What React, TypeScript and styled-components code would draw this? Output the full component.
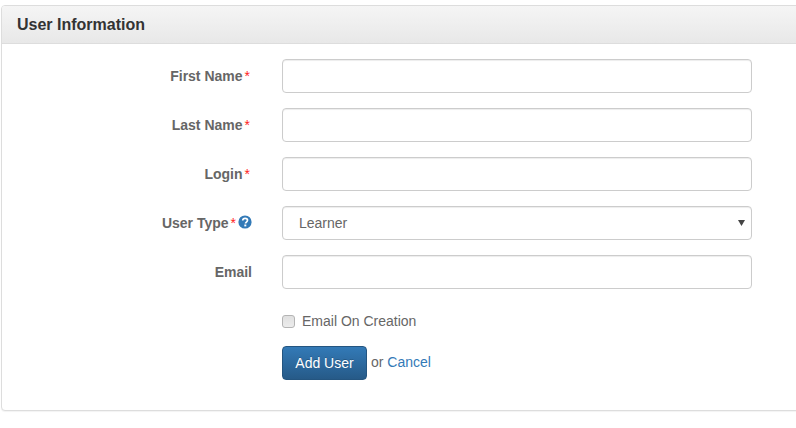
import React from "react";
import styled, { createGlobalStyle } from "styled-components";

const Global = createGlobalStyle`
  html, body { margin: 0; padding: 0; background: #fff; overflow: hidden; }
  body { font-family: "Liberation Sans", Arial, sans-serif; font-size: 14px; color: #555; }
`;
const Page = styled.div`
  width: 796px;
  height: 428px;
  overflow: hidden;
  padding: 5px 0 0 1px;
  box-sizing: border-box;
`;
const Panel = styled.section`
  width: 820px;
  height: 406px;
  box-sizing: border-box;
  border: 1px solid #ddd;
  border-radius: 4px;
  box-shadow: 0 1px 1px rgba(0, 0, 0, 0.05);
  background: #fff;
`;
const Header = styled.header`
  height: 37px;
  box-sizing: content-box;
  border-bottom: 1px solid #ddd;
  border-radius: 3px 3px 0 0;
  background: linear-gradient(to bottom, #f5f5f5, #e8e8e8);
  display: flex;
  align-items: center;
  padding-left: 15px;
`;
const Title = styled.h3`
  margin: 0;
  font-size: 16px;
  font-weight: 700;
  color: #333;
`;
const Form = styled.form`
  display: flex;
  flex-direction: column;
  gap: 15px;
  padding-top: 15px;
`;
const Row = styled.div`
  display: grid;
  grid-template-columns: 250px 470px;
  column-gap: 30px;
  align-items: center;
  height: 34px;
`;
const Label = styled.label<{ $inset?: boolean }>`
  display: flex;
  justify-content: flex-end;
  align-items: center;
  font-weight: 700;
  color: #666;
  white-space: nowrap;
  padding-right: ${(p) => (p.$inset ? "2px" : "0")};
`;
const Req = styled.span`
  color: #f22;
  font-weight: 400;
  margin-left: 2px;
`;
const Help = styled.svg`
  width: 14px;
  height: 14px;
  margin-left: 2px;
  margin-top: -2px;
`;
const Input = styled.input`
  box-sizing: border-box;
  width: 470px;
  height: 34px;
  border: 1px solid #ccc;
  border-radius: 4px;
  box-shadow: inset 0 1px 1px rgba(0, 0, 0, 0.075);
  background: #fff;
  padding: 6px 12px;
`;
const SelectBox = styled.div`
  box-sizing: border-box;
  width: 470px;
  height: 34px;
  border: 1px solid #ccc;
  border-radius: 4px;
  box-shadow: inset 0 1px 1px rgba(0, 0, 0, 0.075);
  display: flex;
  align-items: center;
  justify-content: space-between;
  padding: 0 6px 0 16px;
  color: #666;
`;
const Caret = styled.svg`
  width: 7px;
  height: 6px;
`;
const CheckRow = styled.div`
  display: flex;
  align-items: center;
  gap: 7px;
  height: 20px;
  margin: 7px 0 0 280px;
  color: #666;
`;
const CheckBox = styled.span`
  box-sizing: border-box;
  width: 13px;
  height: 13px;
  border: 1px solid #b4b4b4;
  border-radius: 3px;
  background: linear-gradient(to bottom, #e0e0e0, #ececec);
`;
const Actions = styled.div`
  display: flex;
  align-items: center;
  gap: 4px;
  margin: 0 0 0 280px;
`;
const Button = styled.button`
  box-sizing: border-box;
  width: 85px;
  height: 34px;
  border: 1px solid #245580;
  border-radius: 4px;
  background: linear-gradient(to bottom, #337ab7, #265a88);
  color: #fff;
  font: 14px "Liberation Sans", Arial, sans-serif;
  text-shadow: 0 -1px 0 rgba(0, 0, 0, 0.2);
  padding: 0;
`;
const Alt = styled.span`
  color: #666;
  margin-bottom: 2px;
`;
const Link = styled.a`
  color: #337ab7;
  text-decoration: none;
`;

const Field = ({ label, required }: { label: string; required?: boolean }) => (
  <Row>
    <Label $inset={required}>
      {label}
      {required && <Req>*</Req>}
    </Label>
    <Input type="text" />
  </Row>
);

export default function App() {
  return (
    <Page>
      <Global />
      <Panel>
        <Header>
          <Title>User Information</Title>
        </Header>
        <Form onSubmit={(e) => e.preventDefault()}>
          <Field label="First Name" required />
          <Field label="Last Name" required />
          <Field label="Login" required />
          <Row>
            <Label>
              User Type<Req>*</Req>
              <Help viewBox="0 0 14 14" aria-hidden>
                <circle cx="7" cy="7" r="6.6" fill="#337ab7" />
                <path d="M4.7 5.5C4.8 4.1 5.8 3.3 7.1 3.3c1.4 0 2.4.9 2.4 2 0 1.9-2 1.7-2 3.3" fill="none" stroke="#fff" strokeWidth="1.7" />
                <rect x="6.3" y="9.5" width="2" height="1.9" fill="#fff" />
              </Help>
            </Label>
            <SelectBox>
              Learner
              <Caret viewBox="0 0 7 6" aria-hidden>
                <path d="M0 0h7L3.5 6z" fill="#444" />
              </Caret>
            </SelectBox>
          </Row>
          <Field label="Email" />
          <CheckRow>
            <CheckBox />
            Email On Creation
          </CheckRow>
          <Actions>
            <Button type="submit">Add User</Button>
            <Alt>
              or <Link href="#">Cancel</Link>
            </Alt>
          </Actions>
        </Form>
      </Panel>
    </Page>
  );
}
